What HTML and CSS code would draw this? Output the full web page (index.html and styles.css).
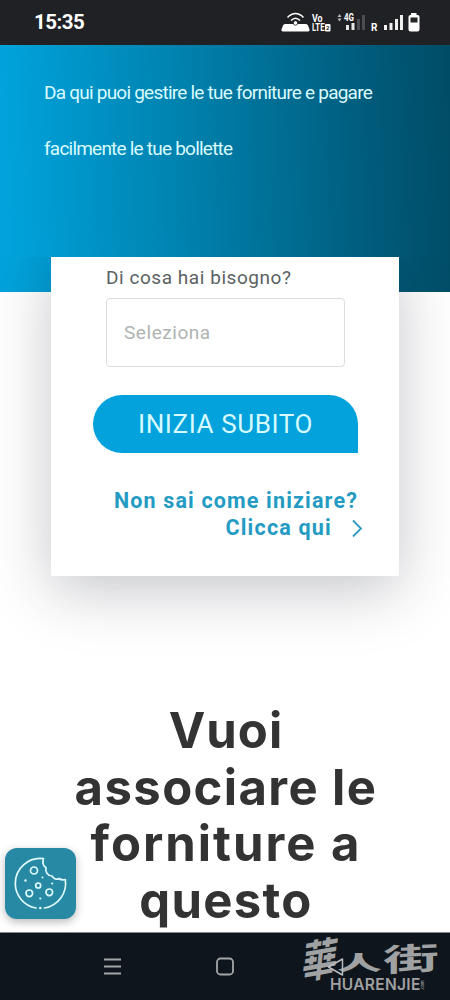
FILE: index.html
```html
<!DOCTYPE html>
<html lang="it">
<head>
<meta charset="utf-8">
<title>Servizi online</title>
<link rel="stylesheet" href="styles.css">
</head>
<body>
<div class="phone">
  <header class="status">
    <span class="clock">15:35</span>
    <svg class="status-icons" width="142" height="26" viewBox="0 0 142 26">
      <path d="M7 16h21q1.500 0 2 1.500l1.500 4q.5 2-1.500 2H5q-2 0-1.500-2l1.500-4Q5.500 16 7 16Z" fill="#fff"/>
      <path d="M9.500 9.500q8-8 16 0M13 12.500q4.500-4.500 9 0" fill="none" stroke="#fff" stroke-width="1.500"/>
      <circle cx="17.500" cy="15" r="2.200" fill="#fff" stroke="#202124" stroke-width=".8"/>
      <text x="34" y="14" class="tiny" textLength="10.500" lengthAdjust="spacingAndGlyphs">Vo</text>
      <text x="34" y="23" class="tiny" textLength="12.500" lengthAdjust="spacingAndGlyphs">LTE</text>
      <rect x="47" y="16" width="5.500" height="7.500" rx="1" fill="#fff"/>
      <text x="48" y="22" class="micro">2</text>
      <path d="M59.500 9 61.500 6l2 3ZM59.500 10.500l2 3 2-3Z" fill="#b8babb"/>
      <text x="66" y="13" class="tiny" textLength="10" lengthAdjust="spacingAndGlyphs">4G</text>
      <path d="M68 17h3v5h-3ZM73.500 15h3v7h-3Z" fill="#e6e6e6"/>
      <path d="M79 11h3v11h-3ZM84 7h3v15h-3Z" fill="#4c4d50"/>
      <text x="93" y="22.500" class="tiny">R</text>
      <path d="M106 17h3v5h-3ZM111.500 15h3v7h-3ZM117 11h3v11h-3ZM122 7h3v15h-3Z" fill="#efefef"/>
      <path d="M133 5h5.500v3h-5.500Z" fill="#fff"/>
      <rect x="130.500" y="7" width="11" height="16.500" rx="2" fill="#fff"/>
      <path d="M132.500 9.500h7v5h-7Z" fill="#242527"/>
    </svg>
  </header>

  <section class="hero">
    <p class="hero-line hero-first">Da qui puoi gestire le tue forniture e pagare</p>
    <p class="hero-line hero-second">facilmente le tue bollette</p>
  </section>

  <main class="content">
    <section class="card">
      <label class="label">Di cosa hai bisogno?</label>
      <div class="select"><span class="placeholder">Seleziona</span></div>
      <div class="button"><span>INIZIA SUBITO</span></div>
      <div class="help">
        <span class="help-question">Non sai come iniziare?</span>
        <span class="help-row">
          <span class="help-click">Clicca qui</span>
          <svg width="12" height="19" viewBox="0 0 12 19"><path d="m1 1.500 8 8-8 8" fill="none" stroke="#2b9cc1" stroke-width="1.800"/></svg>
        </span>
      </div>
    </section>
    <h1 class="title">
      <span class="t1">Vuoi</span>
      <span class="t2">associare le</span>
      <span class="t3">forniture a</span>
      <span class="t4">questo</span>
    </h1>
  </main>

  <div class="cookie">
    <svg width="71" height="71" viewBox="0 0 71 71" fill="none" stroke="#dffbff" stroke-width="1.700">
      <path d="M31 60A25 25 0 0 1 10.300 35.300A25 25 0 0 1 38.500 10.600C37.500 14 38 18 41 19.500C40 24 43 28 47 28C49 31 52 32 54 30.500C56 32 58.500 32 60.300 31.500A25 25 0 0 1 39.500 60" stroke-linejoin="round" stroke-linecap="round"/>
      <circle cx="29" cy="22.500" r="3.500"/><circle cx="33.200" cy="37.500" r="2.500"/>
      <circle cx="24.300" cy="45.300" r="3.300"/><circle cx="44.300" cy="44.300" r="3.300"/>
      <g fill="#dffbff" stroke="none"><circle cx="20.500" cy="32.500" r="1.200"/><circle cx="37.500" cy="29.500" r="1"/><circle cx="47.200" cy="35.500" r="1.100"/><circle cx="35.300" cy="50.500" r="1.100"/><circle cx="35.300" cy="60" r="1.300"/></g>
    </svg>
  </div>

  <nav class="nav">
    <svg width="450" height="67" viewBox="0 0 450 67" fill="none" stroke="#a4a7aa" stroke-width="1.800">
      <path d="M104 26.500h17M104 33.500h17M104 40.500h17"/>
      <rect x="217" y="25.500" width="16" height="16" rx="3.500"/>
    </svg>
    <div class="mark" lang="zh-Hant">
      <span class="han h1">華</span><span class="han h2">人</span><span class="han h3">街</span>
      <span class="latin">HUARENJIE</span><span class="com">.com</span>
    </div>
    <svg class="back" width="18" height="20" viewBox="0 0 18 20"><path d="m15.500 2-14 8 14 8Z" fill="none" stroke="#b9bcbe" stroke-width="1.500" stroke-linejoin="round"/></svg>
  </nav>
</div>
</body>
</html>
```
FILE: styles.css
```css
* { box-sizing: border-box; }
body { margin: 0; background: #fff; font-family: Roboto, "Liberation Sans", sans-serif; }
.phone { position: relative; display: flex; flex-direction: column; width: 450px; height: 1000px; overflow: hidden; background: #fff; }

.status { display: flex; justify-content: space-between; flex: none; height: 45px; padding: 0 30px 0 34px; background: #202124; }
.clock { padding-top: 10px; font-size: 20.5px; line-height: 25px; font-weight: 700; letter-spacing: -0.5px; color: #fff; }
.status-icons { margin-top: 8px; }
.tiny { font: 700 10px Roboto, sans-serif; fill: #fff; }
.micro { font: 700 6px Roboto, sans-serif; fill: #202124; }

.hero { flex: none; height: 247px; padding: 33px 0 0 44px; background: linear-gradient(88deg, #00a3dc 2%, #007da8 46%, #005b7b 82%, #004c66 100%); color: #d9fbff; }
.hero-line { margin: 0 0 26px; font-size: 19px; line-height: 30px; white-space: nowrap; }
.hero-first { letter-spacing: -0.77px; }
.hero-second { letter-spacing: -0.78px; }

.content { display: flex; flex-direction: column; align-items: center; flex: 1; min-height: 0; }
.card { display: flex; flex-direction: column; flex: none; width: 348px; height: 319px; margin-top: -35px; padding: 9px 35px 0 55px; background: #fff; box-shadow: 0 14px 56px rgba(30, 34, 50, .26); clip-path: inset(0 -60px -100px -60px); }
.label { font-size: 19px; line-height: 24px; letter-spacing: .55px; color: #5b6163; }
.select { display: flex; align-items: center; width: 239px; height: 69px; margin-top: 8px; padding-left: 17px; border: 1.5px solid #dcdddd; border-radius: 4px; }
.placeholder { font-size: 19px; letter-spacing: .55px; color: #b0b3b3; }
.button { display: flex; align-items: center; justify-content: center; width: 265px; height: 58px; margin: 28px 0 0 -13px; border-radius: 29px 29px 0 29px; background: #03a2dc; color: #d6faff; font-size: 26px; letter-spacing: .6px; }
.help { display: flex; flex-direction: column; align-items: flex-end; margin-top: 34px; color: #249bc3; font-size: 21.5px; line-height: 27px; font-weight: 700; white-space: nowrap; }
.help-question { margin-right: 6px; letter-spacing: 1.15px; }
.help-row { display: flex; align-items: center; gap: 20px; }
.help-row svg { position: relative; top: 1px; }
.help-click { letter-spacing: 1.2px; }

.title { display: flex; flex-direction: column; align-items: center; margin: 127px 0 0 2px; font-family: Inter, sans-serif; font-size: 49px; line-height: 56.5px; font-weight: 650; color: #333; white-space: nowrap; }
.t1 { letter-spacing: 1px; }
.t2 { letter-spacing: 1.4px; }
.t3 { letter-spacing: 2px; }
.t4 { letter-spacing: 1.3px; }

.cookie { position: absolute; left: 5px; top: 848px; width: 71px; height: 71px; border-radius: 12px; background: #2789a4; box-shadow: 0 3px 8px rgba(0, 0, 0, .28); }
.cookie svg { display: block; }

.nav { position: relative; flex: none; height: 67px; background: #0e151c; box-shadow: 0 -1px #858789; }
.nav svg { display: block; }
.mark { position: absolute; left: 300px; top: 0; width: 150px; height: 67px; color: #a0a1a2; }
.han { position: absolute; font: 900 40px/40px "Noto Sans CJK TC", sans-serif; transform-origin: 0 0; }
.h1 { left: 5px; top: 5px; font-weight: 700; transform: skew(-6deg, -10deg) scale(.88, 1.12); }
.h2 { left: 37px; top: 19px; transform: scale(1.12, .5); }
.h3 { left: 83px; top: 10px; font-weight: 700; transform: skewY(-3deg) scale(1.4, .78); }
.latin { position: absolute; left: 30px; top: 43px; font: 600 15.5px/18px Inter, sans-serif; letter-spacing: .3px; }
.com { position: absolute; left: 121px; top: 57px; font: 600 4px/4px Inter, sans-serif; transform: rotate(-90deg); transform-origin: 0 0; }
.nav .back { position: absolute; left: 327px; top: 24px; }
```
